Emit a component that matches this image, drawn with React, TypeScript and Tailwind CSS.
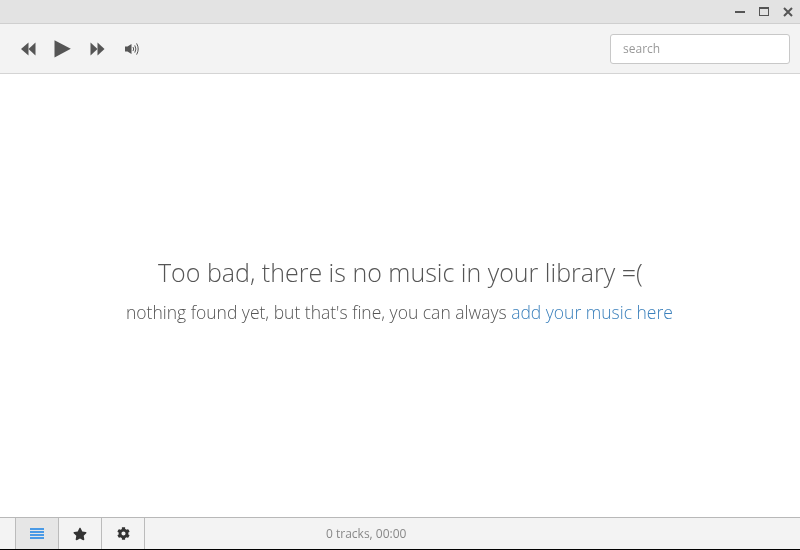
import { FaCog, FaStar } from 'react-icons/fa'

const openSans = "font-['Open_Sans',sans-serif]"

function Rewind() {
  return (
    <svg width="15" height="14" viewBox="0 0 15 14" className="fill-[#555]">
      <path d="M0 7 L7.5 0.5 V13.5 Z" />
      <path d="M7.5 7 L14.5 0.5 V13.5 Z" />
    </svg>
  )
}

function Forward() {
  return (
    <svg width="15" height="14" viewBox="0 0 15 14" className="fill-[#555]">
      <path d="M0.5 0.5 L7.5 7 L0.5 13.5 Z" />
      <path d="M7.5 0.5 L14.5 7 L7.5 13.5 Z" />
    </svg>
  )
}

function Play() {
  return (
    <svg width="17" height="18" viewBox="0 0 17 18" className="fill-[#555]">
      <path d="M0.5 0.2 L16.8 8.8 L0.5 17.4 Z" />
    </svg>
  )
}

function Volume() {
  return (
    <svg width="16" height="14" viewBox="0 0 16 14" fill="none">
      <path d="M1 4.5 H3.5 L7.5 2 V12 L3.5 9.5 H1 Z" fill="#555" />
      <path d="M9 5 Q10.4 7 9 9" stroke="#555" strokeWidth="1" />
      <path d="M10.8 3.4 Q13 7 10.8 10.6" stroke="#555" strokeWidth="1" />
      <path d="M12.6 1.4 Q15.8 7 12.6 12.6" stroke="#555" strokeWidth="1" />
    </svg>
  )
}

function ListIcon() {
  return (
    <svg width="14" height="11" viewBox="0 0 14 11" className="fill-[#4a9ae6]">
      <rect y="0" width="14" height="2" />
      <rect y="3" width="14" height="2" />
      <rect y="6" width="14" height="2" />
      <rect y="9" width="14" height="2" />
    </svg>
  )
}

export default function App() {
  return (
    <div className={`flex h-[550px] w-[800px] flex-col overflow-hidden bg-white ${openSans}`}>
      {/* タイトルバー */}
      <div className="flex h-6 shrink-0 items-center justify-end border-b border-[#cfcfcf] bg-[#e3e3e3]">
        <div className="mr-[14px] h-[2px] w-[10px] bg-[#555]" />
        <div className="mr-[14px] h-[9px] w-[10px] border border-t-2 border-[#555]" />
        <svg width="10" height="10" viewBox="0 0 10 10" className="mr-[7px] stroke-[#555]" strokeWidth="2">
          <path d="M1 1 L9 9 M9 1 L1 9" />
        </svg>
      </div>

      {/* ツールバー */}
      <div className="flex h-[50px] shrink-0 items-center border-b border-[#d4d4d4] bg-[#f3f3f3] pl-[21px] pr-[10px] pt-px">
        <Rewind />
        <div className="ml-[18px]"><Play /></div>
        <div className="ml-[19px]"><Forward /></div>
        <div className="ml-[19px]"><Volume /></div>
        <div className="ml-auto h-[30px] w-[180px] rounded-[3px] border border-[#c8c8c8] bg-white">
          <input
            placeholder="search"
            readOnly
            className="block h-[26px] w-full bg-transparent px-3 text-xs text-[#555] outline-none will-change-transform placeholder:text-[#999]"
          />
        </div>
      </div>

      {/* 空のライブラリ */}
      <div className="flex flex-1 flex-col items-center justify-center pb-[11px]">
        <h1 className="text-[25px] leading-8 font-light text-[#555] will-change-transform">
          Too bad, there is no music in your library =(
        </h1>
        <p className="mt-[12px] pr-[0.6px] text-[17.5px] leading-6 font-light text-[#555] will-change-transform">
          nothing found yet, but that's fine, you can always{' '}
          <a className="text-[#3b80bc]">add your music here</a>
        </p>
      </div>

      {/* フッター */}
      <div className="flex h-[33px] shrink-0 border-t border-b border-t-[#b8b8b8] border-b-black bg-[#f3f3f3] pl-[15px]">
        <div className="flex h-full w-11 items-center justify-center border-x border-[#bbb] bg-[#e6e6e6]">
          <ListIcon />
        </div>
        <div className="flex h-full w-[43px] items-center justify-center border-r border-[#bbb]">
          <FaStar size={14} className="text-[#333]" />
        </div>
        <div className="flex h-full w-[43px] items-center justify-center border-r border-[#bbb]">
          <FaCog size={13} className="text-[#333]" />
        </div>
        <span className="ml-[181px] self-center text-xs text-[#888] will-change-transform">0 tracks, 00:00</span>
      </div>
    </div>
  )
}
